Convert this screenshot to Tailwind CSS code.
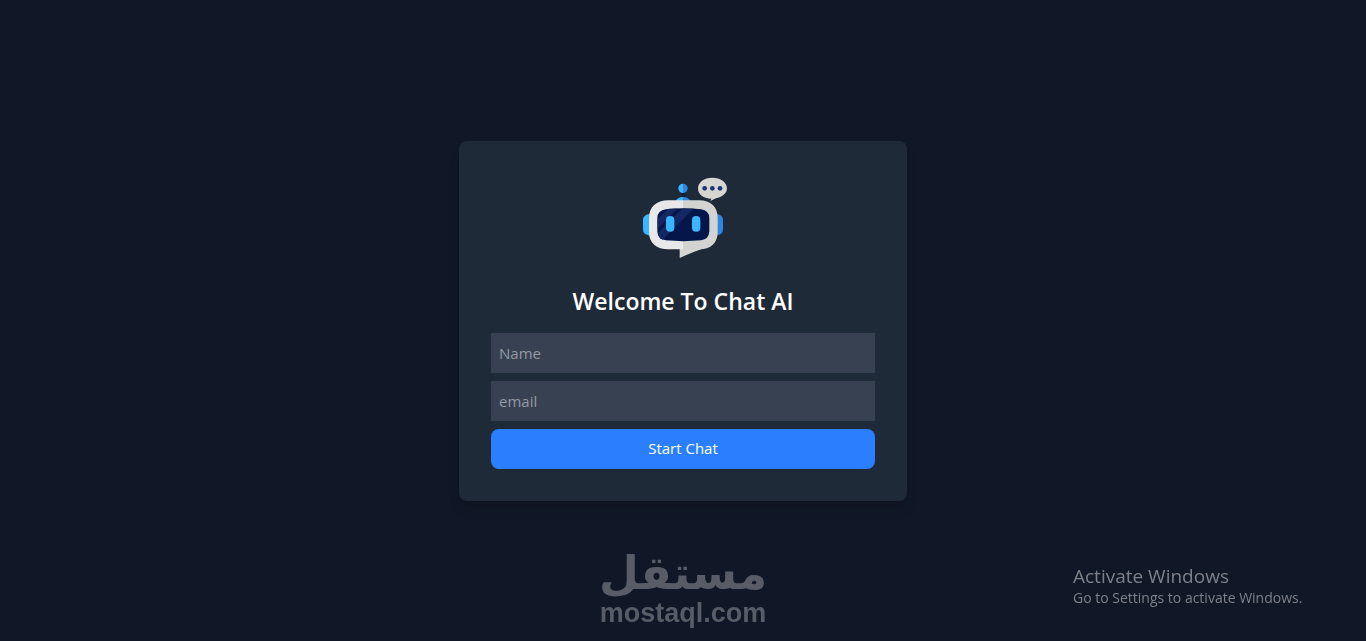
<!DOCTYPE html>
<html lang="en">
  <head>
    <meta charset="UTF-8" />
    <meta name="viewport" content="width=device-width, initial-scale=1.0" />
    <title>Chat AI</title>
    <script src="https://cdn.jsdelivr.net/npm/@tailwindcss/browser@4"></script>
  </head>
  <body class="bg-[#101726] text-white font-['Open_Sans','Noto_Sans',sans-serif]">
    <main class="min-h-screen flex items-center justify-center">
      <!-- Login Card -->
      <div class="bg-[#1f2a38] w-full max-w-md p-8 rounded-lg shadow-lg">
        <!-- Robot -->
        <svg class="size-24 mx-auto mb-4" viewBox="6 15 288 288" aria-hidden="true">
          <defs>
            <clipPath id="screen">
              <rect x="74" y="122" width="155" height="96" rx="26" />
            </clipPath>
          </defs>
          <path d="M52 138C36 139 30 146 30 157V183C30 195 36 201 52 202Z" fill="#38b6ff" />
          <path d="M248 138C264 139 270 146 270 157V183C270 195 264 201 248 202Z" fill="#2e86e0" />
          <path d="M146 72h10v18h-10z" fill="#101c3c" />
          <path d="M150 47a14 14 0 0 0 0 28Z" fill="#38b6ff" />
          <path d="M150 47a14 14 0 0 1 0 28Z" fill="#2e86e0" />
          <path d="M128 100C132 90 140 87 150 87V100Z" fill="#38b6ff" />
          <path d="M172 100C168 90 160 87 150 87V100Z" fill="#2e86e0" />
          <path d="M140 240H215C190 248 165 258 140 270Z" fill="#d6d6d3" />
          <path d="M150 97H106C70 97 48 117 48 150V192C48 225 70 244 106 244H150Z" fill="#e8e8eb" />
          <path d="M150 97H198C234 97 254 117 254 150V192C254 225 234 244 198 244H150Z" fill="#d3d3d1" />
          <path d="M98 124Q150 118 204 124Q228 127 229 150V190Q228 214 204 217Q150 222 98 217Q74 214 73 190V150Q74 127 98 124Z" fill="#05174a" />
          <g clip-path="url(#screen)" fill="#142863">
            <path d="M112 116H139L68 187V160Z" />
            <path d="M153 116H188L84 220L72 197Z" />
          </g>
          <rect x="99" y="144" width="25" height="47" rx="12" fill="#38b6ff" />
          <rect x="177" y="144" width="25" height="47" rx="12" fill="#38b6ff" />
          <path d="M238 29C263 29 282 43 282 61C282 77 266 88 249 91L232 99L235 92C211 92 195 79 195 61C195 43 213 29 238 29Z" fill="#d5d5d2" />
          <g fill="#1d3476">
            <circle cx="215" cy="61" r="7" />
            <circle cx="238" cy="61" r="7" />
            <circle cx="261" cy="61" r="7" />
          </g>
        </svg>
        <h1 class="text-[23px] leading-8 font-semibold text-center mb-4">Welcome To Chat AI</h1>
        <form class="flex flex-col gap-2">
          <input
            type="text"
            aria-label="Name"
            placeholder="Name"
            class="w-full h-10 p-2 text-[15px] bg-[#374151] placeholder:text-[#959aa3]"
          />
          <input
            type="email"
            aria-label="email"
            placeholder="email"
            class="w-full h-10 p-2 text-[15px] bg-[#374151] placeholder:text-[#959aa3]"
          />
          <button type="submit" class="w-full h-10 text-[15px] bg-[#2b7fff] rounded-lg">Start Chat</button>
        </form>
      </div>
    </main>

    <!-- Site watermark -->
    <div class="fixed inset-x-0 bottom-3 flex flex-col items-center text-[#585c67] font-bold pointer-events-none">
      <span lang="ar" dir="rtl" class="text-[46px] leading-12 font-['DejaVu_Sans',sans-serif]">مستقل</span>
      <span class="text-[27px] leading-8 font-['Liberation_Sans',sans-serif]">mostaql.com</span>
    </div>

    <!-- System notice -->
    <div class="fixed bottom-[33px] right-14 w-[237px] text-[#7d818a] pointer-events-none">
      <p class="text-[19px] leading-6">Activate Windows</p>
      <p class="text-sm leading-5">Go to Settings to activate Windows.</p>
    </div>
  </body>
</html>
